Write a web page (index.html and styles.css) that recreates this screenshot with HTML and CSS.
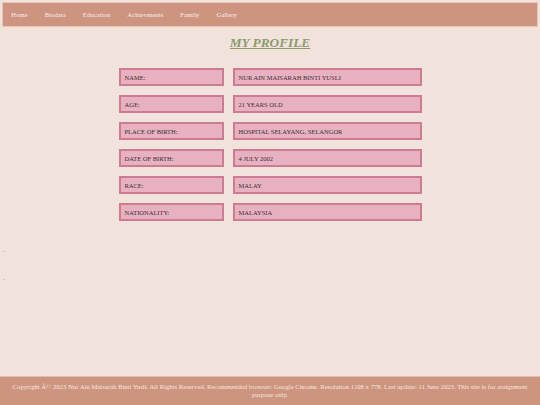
FILE: index.html
```html
<!DOCTYPE html>
<html>
<head>
<meta charset="utf-8">
<title>My Profile</title>
<link rel="stylesheet" href="styles.css">
</head>
<body>
<div class="page">
  <nav class="nav">
    <a href="#">Home</a>
    <a href="#">Biodata</a>
    <a href="#">Education</a>
    <a href="#">Achievments</a>
    <a href="#">Family</a>
    <a href="#">Gallery</a>
  </nav>
  <h1 class="title">MY PROFILE</h1>
  <div class="table">
    <div class="row"><div class="cell label">NAME:</div><div class="cell value">NUR AIN MAISARAH BINTI YUSLI</div></div>
    <div class="row"><div class="cell label">AGE:</div><div class="cell value">21 YEARS OLD</div></div>
    <div class="row"><div class="cell label">PLACE OF BIRTH:</div><div class="cell value">HOSPITAL SELAYANG, SELANGOR</div></div>
    <div class="row"><div class="cell label">DATE OF BIRTH:</div><div class="cell value">4 JULY 2002</div></div>
    <div class="row"><div class="cell label">RACE:</div><div class="cell value">MALAY</div></div>
    <div class="row"><div class="cell label">NATIONALITY:</div><div class="cell value">MALAYSIA</div></div>
  </div>
  <div class="dots">
    <span class="dot">.</span>
    <span class="dot">.</span>
  </div>
</div>
<footer class="footer">
  Copyright Ã© 2023 Nur Ain Maisarah Binti Yusli. All Rights Reserved. Recommended browser: Google Chrome. Resolution 1108 x 778. Last update: 11 June 2023. This site is for assignment purpose only.
</footer>
</body>
</html>
```
FILE: styles.css
```css
html, body {
  margin: 0;
  padding: 0;
}
body {
  background: #f1e2db;
  font-family: "Liberation Serif", "Times New Roman", serif;
  min-height: 100vh;
  display: flex;
  flex-direction: column;
}
.page {
  padding: 3px 3px 0 3px;
  flex: 1;
}
.nav {
  background: #cd9580;
  height: 23px;
  display: flex;
  align-items: center;
  padding: 0 0 0 8px;
  gap: 17px;
  box-shadow: 0 0 0 1px #e6c6b8;
}
.nav a {
  color: #f8ebe4;
  text-decoration: none;
  font-size: 6.8px;
}
.title {
  margin: 9px 0 0 0;
  text-align: center;
  font-size: 13.3px;
  line-height: 15px;
  font-style: italic;
  font-weight: bold;
  color: #8a9a6b;
  text-decoration: underline;
}
.table {
  width: 303px;
  margin: 18px auto 0 auto;
  display: flex;
  flex-direction: column;
  gap: 9px;
}
.row {
  display: flex;
  gap: 9px;
}
.cell {
  box-sizing: border-box;
  height: 18px;
  background: #e8b1c1;
  border: 2px solid #cd7b91;
  font-size: 6.5px;
  color: #3d2f33;
  display: flex;
  align-items: center;
  padding-left: 4px;
}
.label {
  width: 105px;
}
.value {
  width: 189px;
}
.dots {
  display: flex;
  flex-direction: column;
  gap: 18px;
  margin-top: 24px;
  padding-left: 0;
}
.dot {
  font-size: 7px;
  line-height: 10px;
  color: #8a7a78;
}
.footer {
  background: #cd9580;
  border-top: 1px solid #e2bcad;
  color: #f6e6df;
  font-size: 6.7px;
  line-height: 8px;
  text-align: center;
  padding: 6px 9px 6px 9px;
}
```
